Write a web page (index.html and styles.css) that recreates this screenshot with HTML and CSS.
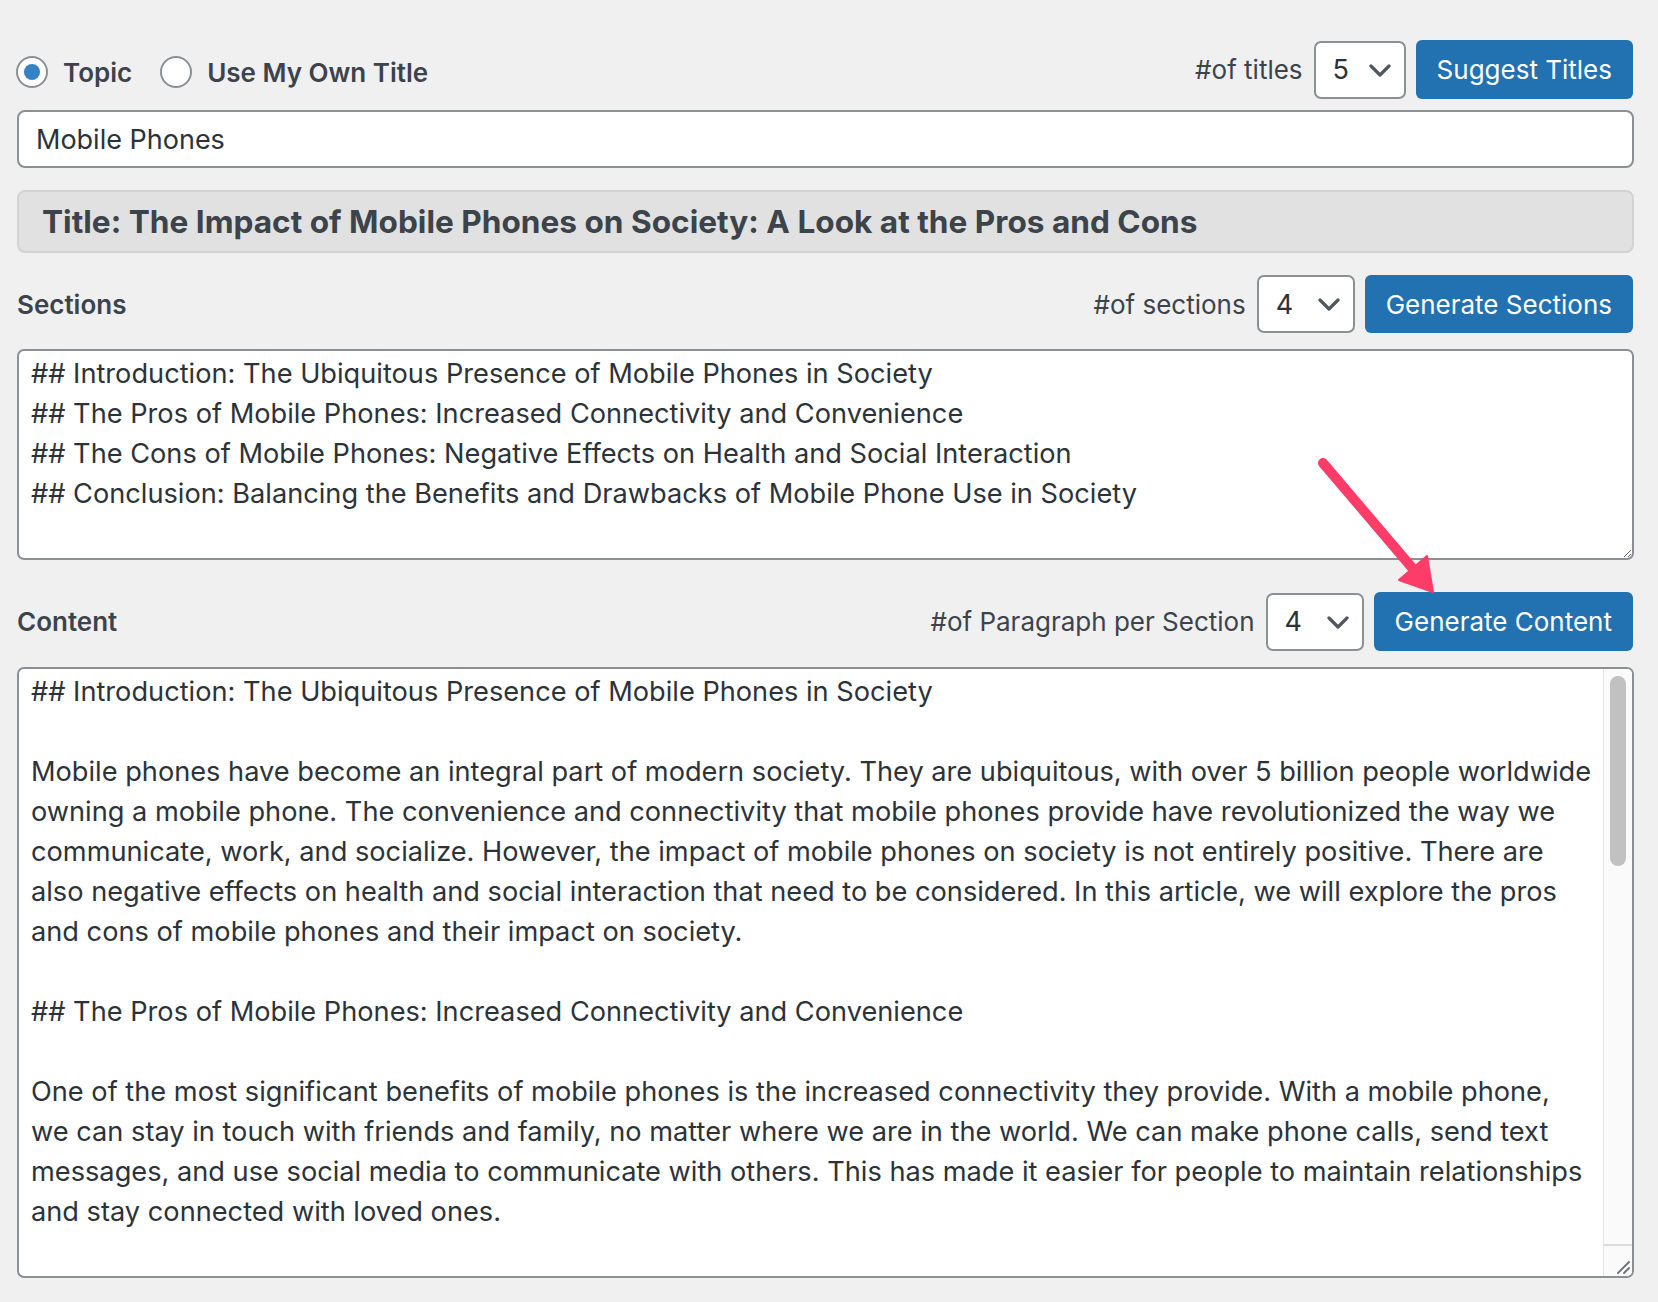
FILE: index.html
```html
<!DOCTYPE html>
<html lang="en">
<head>
<meta charset="utf-8">
<title>Content Generator</title>
<link rel="stylesheet" href="styles.css">
</head>
<body>
<div class="page">
  <div class="row row-top">
    <div class="radios">
      <label class="radio"><input type="radio" name="mode" checked>Topic</label>
      <label class="radio"><input type="radio" name="mode">Use My Own Title</label>
    </div>
    <div class="controls">
      <span class="ctl-label">#of titles</span>
      <div class="select select-sm">
        <select><option>5</option></select>
        <svg class="chev" width="22" height="13" viewBox="0 0 22 13"><path d="M2 2 L11 11 L20 2" fill="none" stroke="#50575e" stroke-width="3.2" stroke-linecap="round" stroke-linejoin="round"/></svg>
      </div>
      <button class="btn">Suggest Titles</button>
    </div>
  </div>

  <input class="topic" type="text" value="Mobile Phones">

  <div class="title-box">Title: The Impact of Mobile Phones on Society: A Look at the Pros and Cons</div>

  <div class="row row-sec">
    <span class="heading">Sections</span>
    <div class="controls">
      <span class="ctl-label">#of sections</span>
      <div class="select">
        <select><option>4</option></select>
        <svg class="chev" width="22" height="13" viewBox="0 0 22 13"><path d="M2 2 L11 11 L20 2" fill="none" stroke="#50575e" stroke-width="3.2" stroke-linecap="round" stroke-linejoin="round"/></svg>
      </div>
      <button class="btn">Generate Sections</button>
    </div>
  </div>

  <textarea class="area sections">## Introduction: The Ubiquitous Presence of Mobile Phones in Society
## The Pros of Mobile Phones: Increased Connectivity and Convenience
## The Cons of Mobile Phones: Negative Effects on Health and Social Interaction
## Conclusion: Balancing the Benefits and Drawbacks of Mobile Phone Use in Society</textarea>

  <div class="row row-con">
    <span class="heading">Content</span>
    <div class="controls">
      <span class="ctl-label">#of Paragraph per Section</span>
      <div class="select">
        <select><option>4</option></select>
        <svg class="chev" width="22" height="13" viewBox="0 0 22 13"><path d="M2 2 L11 11 L20 2" fill="none" stroke="#50575e" stroke-width="3.2" stroke-linecap="round" stroke-linejoin="round"/></svg>
      </div>
      <button class="btn">Generate Content</button>
    </div>
  </div>

  <div class="content-box">
    <textarea class="area content">## Introduction: The Ubiquitous Presence of Mobile Phones in Society

Mobile phones have become an integral part of modern society. They are ubiquitous, with over 5 billion people worldwide
owning a mobile phone. The convenience and connectivity that mobile phones provide have revolutionized the way we
communicate, work, and socialize. However, the impact of mobile phones on society is not entirely positive. There are
also negative effects on health and social interaction that need to be considered. In this article, we will explore the pros
and cons of mobile phones and their impact on society.

## The Pros of Mobile Phones: Increased Connectivity and Convenience

One of the most significant benefits of mobile phones is the increased connectivity they provide. With a mobile phone,
we can stay in touch with friends and family, no matter where we are in the world. We can make phone calls, send text
messages, and use social media to communicate with others. This has made it easier for people to maintain relationships
and stay connected with loved ones.

Mobile phones have also made our lives more convenient. We can access the internet, check our emails, shop online, and manage our finances from anywhere at any time. Mobile apps allow us to book appointments, order food, and navigate unfamiliar places with ease.

## The Cons of Mobile Phones: Negative Effects on Health and Social Interaction

Despite their many benefits, mobile phones also have negative effects on our health and on the way we interact with the people around us.

## Conclusion: Balancing the Benefits and Drawbacks of Mobile Phone Use in Society

By using mobile phones mindfully and setting healthy boundaries, we can enjoy the benefits of this technology while minimizing its drawbacks.</textarea>
    <div class="vscroll" aria-hidden="true">
      <div class="thumb"></div>
      <div class="corner">
        <svg class="grip" width="16" height="16" viewBox="0 0 16 16"><path d="M14 3 L3 14 M14 9 L9 14" stroke="#6b6e72" stroke-width="1.8" stroke-linecap="round"/></svg>
      </div>
    </div>
  </div>

  <svg class="arrow" width="150" height="150" viewBox="0 0 150 150">
    <line x1="13" y1="13" x2="104" y2="120" stroke="#fd3c68" stroke-width="10" stroke-linecap="round"/>
    <polygon points="123,142 89,130 117,106" fill="#fd3c68" stroke="#fd3c68" stroke-width="2" stroke-linejoin="round"/>
  </svg>
</div>
</body>
</html>
```

FILE: styles.css
```css
html, body {
  margin: 0;
  padding: 0;
}

body {
  background: #f0f0f1;
  font-family: Inter, "Noto Sans", "Liberation Sans", sans-serif;
  color: #2c3338;
}

.page {
  position: relative;
  padding: 40px 24px 26px 17px;
}

.row {
  display: flex;
  align-items: center;
  justify-content: space-between;
}

.row-top {
  height: 59px;
}

.row-sec {
  height: 58px;
  margin-top: 22px;
}

.row-con {
  height: 59px;
  margin-top: 32px;
}

.radios {
  display: flex;
  align-items: center;
  margin-left: -1px;
  padding-top: 5px;
}

.radio {
  display: flex;
  align-items: center;
  gap: 15px;
  font-size: 26px;
  font-weight: 600;
  color: #3c434a;
  margin-right: 28px;
}

.radio input {
  appearance: none;
  -webkit-appearance: none;
  margin: 0;
  width: 32px;
  height: 32px;
  box-sizing: border-box;
  border: 2px solid #8c8f94;
  border-radius: 50%;
  background: #fff;
  display: grid;
  place-items: center;
}

.radio input:checked::before {
  content: "";
  width: 16px;
  height: 16px;
  border-radius: 50%;
  background: #3582c4;
}

.controls {
  display: flex;
  align-items: center;
  height: 100%;
  margin-right: 1px;
}

.ctl-label {
  font-size: 26px;
  color: #3c434a;
  margin-right: 11px;
}

.select {
  position: relative;
  width: 98px;
  height: 58px;
  margin-right: 10px;
}

.select-sm {
  width: 92px;
}

.select select {
  appearance: none;
  -webkit-appearance: none;
  width: 100%;
  height: 100%;
  box-sizing: border-box;
  border: 2px solid #8c8f94;
  border-radius: 7px;
  background: #fff;
  font-family: inherit;
  font-size: 27px;
  color: #2c3338;
  padding: 0 0 0 17px;
  margin: 0;
}

.chev {
  position: absolute;
  right: 15px;
  top: 23px;
  pointer-events: none;
}

.btn {
  height: 100%;
  box-sizing: border-box;
  background: #2271b1;
  color: #fff;
  border: none;
  border-radius: 6px;
  font-family: inherit;
  font-size: 26px;
  padding: 0 21px;
  margin: 0;
}

.topic {
  display: block;
  width: 100%;
  box-sizing: border-box;
  height: 58px;
  margin: 11px 0 0 0;
  border: 2px solid #8c8f94;
  border-radius: 8px;
  background: #fff;
  padding: 0 17px;
  font-family: inherit;
  font-size: 27px;
  color: #2c3338;
}

.title-box {
  margin-top: 22px;
  height: 63px;
  box-sizing: border-box;
  background: #e1e1e1;
  border: 2px solid #d2d2d2;
  border-radius: 8px;
  padding: 0 23px;
  display: flex;
  align-items: center;
  font-size: 31.6px;
  font-weight: 700;
  color: #3c434a;
}

.heading {
  font-size: 26px;
  font-weight: 600;
  color: #3c434a;
}

.area {
  display: block;
  width: 100%;
  box-sizing: border-box;
  margin: 16px 0 0 0;
  border: 2px solid #8c8f94;
  border-radius: 7px;
  background: #fff;
  padding: 3px 12px;
  font-family: inherit;
  font-size: 27.2px;
  line-height: 40px;
  color: #2c3338;
  resize: vertical;
}

.sections {
  height: 211px;
  overflow: hidden;
}

.content-box {
  position: relative;
  margin-top: 16px;
}

.content {
  margin: 0;
  height: 611px;
  overflow: hidden;
}

.vscroll {
  position: absolute;
  top: 2px;
  right: 2px;
  bottom: 2px;
  width: 29px;
  box-sizing: border-box;
  background: #fafafa;
  border-left: 1px solid #e4e4e4;
  border-radius: 0 5px 5px 0;
  display: flex;
  flex-direction: column;
  pointer-events: none;
}

.thumb {
  margin: 7px 0 0 6px;
  width: 16px;
  height: 190px;
  border-radius: 8px;
  background: #c1c1c1;
}

.corner {
  margin-top: auto;
  height: 30px;
  border-top: 2px solid #dcdcdc;
  position: relative;
}

.grip {
  position: absolute;
  right: 1px;
  bottom: 1px;
}

.arrow {
  position: absolute;
  left: 1310px;
  top: 450px;
}
```
